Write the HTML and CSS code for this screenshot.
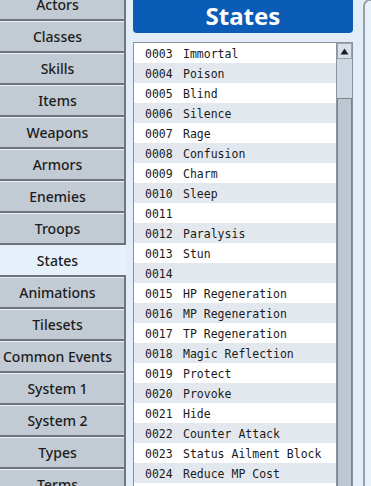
FILE: index.html
```
<!DOCTYPE HTML>
<HTML>
<HEAD>
<META HTTP-EQUIV="Content-type" CONTENT="text/html; charset=utf-8">
<TITLE>Database - States</TITLE>
<link rel="stylesheet" href="styles.css">
</HEAD>
<BODY>

<DIV CLASS="window">

<DIV CLASS="tabs">
<DIV CLASS="tab">Actors</DIV>
<DIV CLASS="tab">Classes</DIV>
<DIV CLASS="tab">Skills</DIV>
<DIV CLASS="tab">Items</DIV>
<DIV CLASS="tab">Weapons</DIV>
<DIV CLASS="tab">Armors</DIV>
<DIV CLASS="tab">Enemies</DIV>
<DIV CLASS="tab">Troops</DIV>
<DIV CLASS="tab current">States</DIV>
<DIV CLASS="tab">Animations</DIV>
<DIV CLASS="tab">Tilesets</DIV>
<DIV CLASS="tab">Common Events</DIV>
<DIV CLASS="tab">System 1</DIV>
<DIV CLASS="tab">System 2</DIV>
<DIV CLASS="tab">Types</DIV>
<DIV CLASS="tab">Terms</DIV>
</DIV>

<DIV CLASS="column">
<DIV CLASS="title">States</DIV>
<DIV CLASS="listbox">
<DIV CLASS="rows">
<DIV CLASS="row"><SPAN CLASS="id">0003</SPAN>Immortal</DIV>
<DIV CLASS="row"><SPAN CLASS="id">0004</SPAN>Poison</DIV>
<DIV CLASS="row"><SPAN CLASS="id">0005</SPAN>Blind</DIV>
<DIV CLASS="row"><SPAN CLASS="id">0006</SPAN>Silence</DIV>
<DIV CLASS="row"><SPAN CLASS="id">0007</SPAN>Rage</DIV>
<DIV CLASS="row"><SPAN CLASS="id">0008</SPAN>Confusion</DIV>
<DIV CLASS="row"><SPAN CLASS="id">0009</SPAN>Charm</DIV>
<DIV CLASS="row"><SPAN CLASS="id">0010</SPAN>Sleep</DIV>
<DIV CLASS="row"><SPAN CLASS="id">0011</SPAN></DIV>
<DIV CLASS="row"><SPAN CLASS="id">0012</SPAN>Paralysis</DIV>
<DIV CLASS="row"><SPAN CLASS="id">0013</SPAN>Stun</DIV>
<DIV CLASS="row"><SPAN CLASS="id">0014</SPAN></DIV>
<DIV CLASS="row"><SPAN CLASS="id">0015</SPAN>HP Regeneration</DIV>
<DIV CLASS="row"><SPAN CLASS="id">0016</SPAN>MP Regeneration</DIV>
<DIV CLASS="row"><SPAN CLASS="id">0017</SPAN>TP Regeneration</DIV>
<DIV CLASS="row"><SPAN CLASS="id">0018</SPAN>Magic Reflection</DIV>
<DIV CLASS="row"><SPAN CLASS="id">0019</SPAN>Protect</DIV>
<DIV CLASS="row"><SPAN CLASS="id">0020</SPAN>Provoke</DIV>
<DIV CLASS="row"><SPAN CLASS="id">0021</SPAN>Hide</DIV>
<DIV CLASS="row"><SPAN CLASS="id">0022</SPAN>Counter Attack</DIV>
<DIV CLASS="row"><SPAN CLASS="id">0023</SPAN>Status Ailment Block</DIV>
<DIV CLASS="row"><SPAN CLASS="id">0024</SPAN>Reduce MP Cost</DIV>
<DIV CLASS="row"></DIV>
</DIV>
<DIV CLASS="scrollbar">
<DIV CLASS="arrow"><SVG WIDTH="9" HEIGHT="7" VIEWBOX="0 0 9 7"><POLYGON POINTS="4.5,0.5 8.5,6.5 0.5,6.5" FILL="#1e1e28"/></SVG></DIV>
<DIV CLASS="thumb"></DIV>
</DIV>
</DIV>
</DIV>

<DIV CLASS="next"></DIV>

</DIV>
</BODY>
</HTML>
```

FILE: styles.css
```
body
  {
	margin : 0;
	background-color : #e3edf9;
	font-family : "Noto Sans", "DejaVu Sans", sans-serif;
	overflow : hidden;
  } /*body*/

div.window
  {
	display : flex;
	height : 486px;
	overflow : hidden;
  } /*div.window*/

div.tabs
  {
	width : 124px;
	margin-top : -11px;
	border-right : 2px solid #6f757b;
	flex : none;
  } /*div.tabs*/
div.tab
  {
	height : 29px;
	line-height : 29px;
	padding-right : 9px;
	text-align : center;
	font-size : 14px;
	font-weight : 500;
	color : #1c1c20;
	background-color : #c2cad3;
	border-top : 1px solid #e8eef4;
	border-bottom : 2px solid #6f7378;
  } /*div.tab*/
div.tab.current
  {
	background-color : #e6f0fb;
	border-top-color : #e6f0fb;
	margin-right : -2px;
	padding-right : 11px;
  } /*div.tab.current*/

div.column
  {
	width : 220px;
	margin-left : 7px;
	flex : none;
	display : flex;
	flex-direction : column;
  } /*div.column*/
div.title
  {
	flex : none;
	height : 33px;
	line-height : 32px;
	padding-bottom : 1px;
	box-sizing : border-box;
	text-align : center;
	font-size : 24px;
	font-weight : bold;
	color : #ffffff;
	background-color : #0b5cb7;
	border-radius : 0 0 4px 4px;
  } /*div.title*/

div.listbox
  {
	margin-top : 9px;
	flex : 1;
	min-height : 0;
	display : flex;
	border : 1px solid #8a9199;
	border-bottom : none;
	background-color : #ffffff;
	overflow : hidden;
  } /*div.listbox*/
div.rows
  {
	flex : 1;
  } /*div.rows*/
div.row
  {
	height : 20px;
	line-height : 22px;
	padding-left : 11px;
	font-family : "DejaVu Sans Mono", monospace;
	font-size : 11.5px;
	color : #1a1a1a;
	white-space : pre;
  } /*div.row*/
div.row:nth-child(even)
  {
	background-color : #e3e8ee;
  } /*div.row:nth-child(even)*/
span.id
  {
	display : inline-block;
	width : 38px;
  } /*span.id*/

div.scrollbar
  {
	width : 15px;
	flex : none;
	border-left : 1px solid #8d949b;
	background-color : #cdd8e3;
  } /*div.scrollbar*/
div.arrow
  {
	height : 14px;
	border : 1px solid #9aa2aa;
	background-color : #d8dfe6;
	display : flex;
	align-items : center;
	justify-content : center;
  } /*div.arrow*/
div.thumb
  {
	margin-top : 39px;
	height : 420px;
	border : 1px solid #7c838a;
	background-color : #bec7d1;
  } /*div.thumb*/

div.next
  {
	flex : 1;
	margin-left : 10px;
	margin-top : -1px;
	border-left : 2px solid #98a1ab;
	border-top : 2px solid #98a1ab;
	border-top-left-radius : 7px;
	background-color : #e8f0fa;
  } /*div.next*/
```
